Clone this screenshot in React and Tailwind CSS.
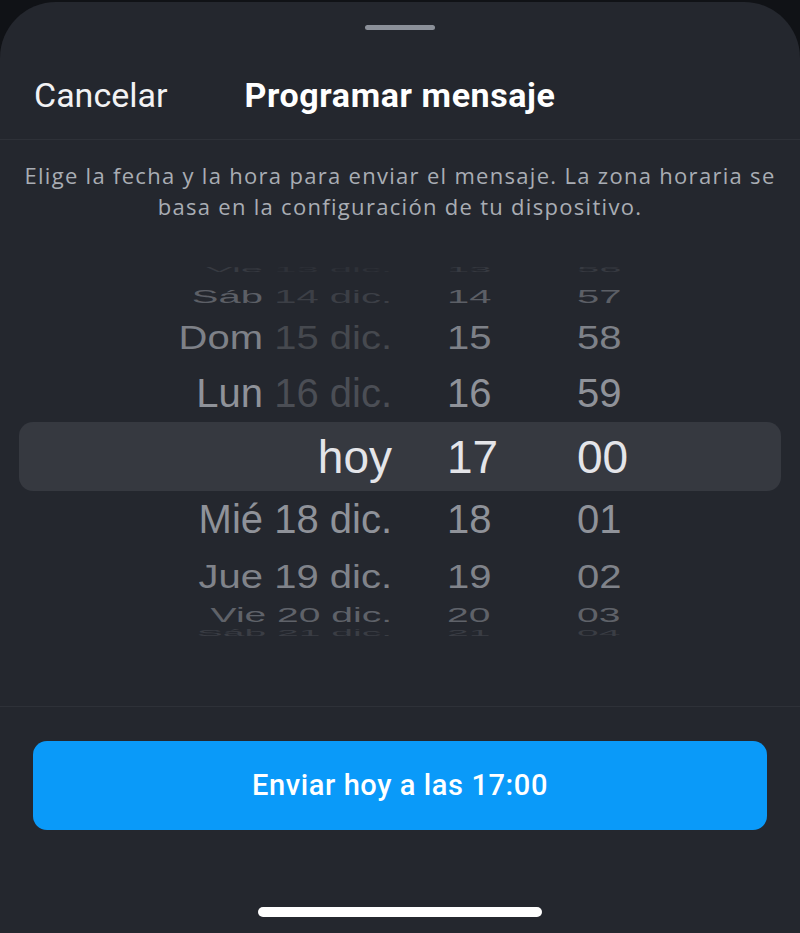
import React from "react";

const rows = [
  { h: 26, sy: 0.18, fs: 40, day: "Vie", date: "13 dic.", hr: "13", mn: "56", dayC: "#373a41", dateC: "#2e3138" },
  { h: 28, sy: 0.47, fs: 40, day: "Sáb", date: "14 dic.", hr: "14", mn: "57", dayC: "#5c5f66", dateC: "#3c3f46" },
  { h: 55, sy: 0.84, fs: 40, day: "Dom", date: "15 dic.", hr: "15", mn: "58", dayC: "#7e8188", dateC: "#46494f" },
  { h: 57, sy: 1, fs: 40, day: "Lun", date: "16 dic.", hr: "16", mn: "59", dayC: "#8f9299", dateC: "#4b4e55" },
  { h: 69, sy: 1, fs: 46, day: "", date: "hoy", hr: "17", mn: "00", dayC: "#e4e5e9", dateC: "#e4e5e9", selected: true },
  { h: 56, sy: 1, fs: 40, day: "Mié", date: "18 dic.", hr: "18", mn: "01", dayC: "#8f9299", dateC: "#8f9299" },
  { h: 58, sy: 0.84, fs: 40, day: "Jue", date: "19 dic.", hr: "19", mn: "02", dayC: "#80838a", dateC: "#80838a" },
  { h: 20, sy: 0.53, fs: 39, day: "Vie", date: "20 dic.", hr: "20", mn: "03", dayC: "#5f6269", dateC: "#5f6269" },
  { h: 18, sy: 0.22, fs: 39, day: "Sáb", date: "21 dic.", hr: "21", mn: "04", dayC: "#3a3d44", dateC: "#3a3d44" },
];

const WheelRow = ({ row }) => {
  const txt = { fontSize: row.fs, transform: `scaleY(${row.sy})` };
  return (
    <div
      className={
        row.selected
          ? "flex items-center mx-[19px] rounded-[14px] bg-[#363940]"
          : "flex items-center"
      }
      style={{ height: row.h }}
    >
      <div className={row.selected ? "w-[373px] text-right" : "w-[392px] text-right"}>
        <span className="inline-block leading-none whitespace-nowrap" style={txt}>
          {row.day && <span style={{ color: row.dayC }}>{row.day} </span>}
          <span style={{ color: row.dateC }}>{row.date}</span>
        </span>
      </div>
      <div className="ml-[55px] w-[130px]">
        <span className="inline-block leading-none" style={{ ...txt, color: row.dayC }}>
          {row.hr}
        </span>
      </div>
      <div>
        <span className="inline-block leading-none" style={{ ...txt, color: row.dayC }}>
          {row.mn}
        </span>
      </div>
    </div>
  );
};

const App = () => {
  return (
    <div className="min-h-[933px] bg-[#101216] pt-[2px] font-['Roboto',sans-serif]">
      <div className="h-[931px] bg-[#24272e] rounded-t-[56px] flex flex-col overflow-hidden">
        <div className="pt-[23px] flex justify-center">
          <div className="h-[5px] w-[70px] rounded-full bg-[#8b9099]"></div>
        </div>

        <div className="h-[110px] pt-[22px] grid grid-cols-[1fr_auto_1fr] items-center border-b border-[#2e3138]">
          <div className="pl-[34px] text-[34px] text-[#f2f2f4]">Cancelar</div>
          <div className="text-[34px] font-bold text-white tracking-[0.6px]">Programar mensaje</div>
          <div></div>
        </div>

        <p className="pt-[20px] px-[2px] text-center text-[22px] leading-[31px] text-[#a9adb4] tracking-[1.3px] font-['Open_Sans',sans-serif]">
          Elige la fecha y la hora para enviar el mensaje. La zona horaria se
          <br />
          basa en la configuración de tu dispositivo.
        </p>

        <div className="mt-[34px] font-['Liberation_Sans',Arial,sans-serif]">
          {rows.map((row, i) => (
            <WheelRow key={i} row={row} />
          ))}
        </div>

        <div className="mt-[63px] border-t border-[#2e3138]"></div>

        <button className="mt-[34px] mx-[33px] h-[89px] rounded-[14px] bg-[#0a9af9] text-white text-[29px] font-medium tracking-[0.6px]">
          Enviar hoy a las 17:00
        </button>

        <div className="mt-[77px] mx-auto h-[10px] w-[284px] rounded-full bg-white"></div>
      </div>
    </div>
  );
};

export default App;
